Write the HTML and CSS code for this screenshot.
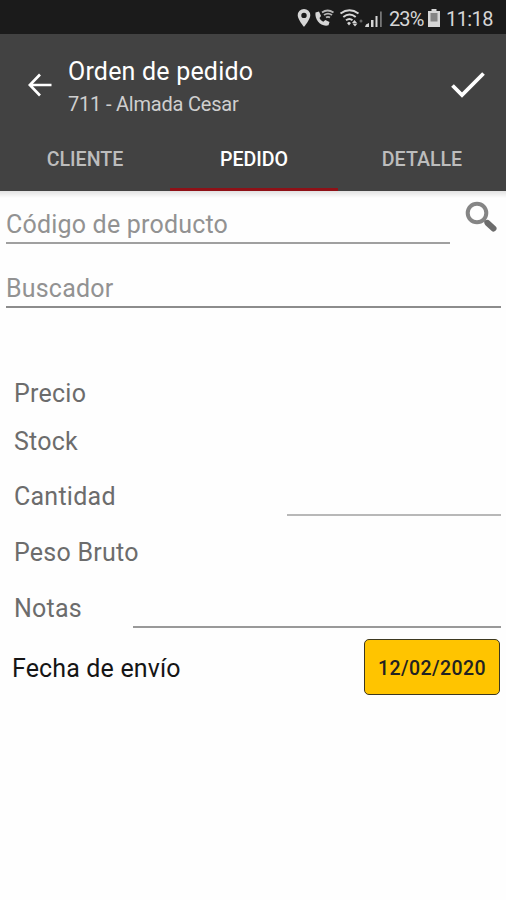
FILE: index.html
```html
<!DOCTYPE html>
<html lang="es">
<head>
<meta charset="utf-8">
<title>Orden de pedido</title>
<link rel="stylesheet" href="styles.css">
</head>
<body>
<div class="status">
  <svg class="status-icons" width="88" height="24" viewBox="0 0 88 24">
    <path fill="#d6d6d6" fill-rule="evenodd" d="M8 3a6.3 6.3 0 0 0-6.3 6.3C1.700 13.500 8 21 8 21s6.300-7.500 6.300-11.700A6.300 6.300 0 0 0 8 3zm0 3.700a2.700 2.700 0 1 1 0 5.400 2.700 2.700 0 0 1 0-5.400z"/>
    <path fill="#d6d6d6" d="M19.500 6.500l3.500-1 2 4.500-1.500 2c.8 1.800 2 3 3.800 3.700l2-1.700 4.200 2-1 3.300c-7.500 2-14-5.500-13-12.800z"/>
    <g fill="none" stroke="#b5b5b5" stroke-width="1.800"><path d="M26 6.500q5.500-4 11.500 0M28 9q4-2.800 8 0M30 11.500q2-1.300 4 0"/></g>
    <g fill="none" stroke="#d6d6d6" stroke-width="2"><path d="M44.500 7.500q9-6.500 18 0M47.300 11q6.200-5 12.400 0M50 14.300q3.500-2.600 6.500 0"/></g>
    <path fill="#d6d6d6" d="M51 17l2-1.300 2 1.300-2 2.500zM56 17l2.500-3 2.500 3zM56.500 17.500h5l-2.500 3z"/>
    <circle cx="65" cy="15" r="1.500" fill="#666"/>
    <path fill="#d6d6d6" d="M70 18.500l3-1.500v4h-4zM75 14h2.500v7H75zM79.500 10h2v11h-2z"/>
    <path fill="#777" d="M84 5.500h1.800V21H84z"/>
  </svg>
  <span class="battery-text">23%</span>
  <svg class="battery" width="12" height="18" viewBox="0 0 12 18"><path fill="#d6d6d6" d="M3.500 0h5v2H12v16H0V2h3.500z"/><path fill="#858585" d="M2.500 4h7v8.500h-7z"/></svg>
  <span class="clock">11:18</span>
</div>
<header class="header">
  <div class="toolbar">
    <svg class="back" width="24" height="24" viewBox="0 0 24 24"><path fill="none" stroke="#fff" stroke-width="2.700" d="M23.500 12H2M12 1.500L1.800 12 12 22.500"/></svg>
    <div class="titles">
      <h1 class="title">Orden de pedido</h1>
      <p class="subtitle">711 - Almada Cesar</p>
    </div>
    <svg class="check" width="34" height="28" viewBox="0 0 34 28"><path fill="none" stroke="#fff" stroke-width="3.800" d="M1.500 14.500l9.500 9.500L32.500 2.500"/></svg>
  </div>
  <nav class="tabs">
    <span class="tab">CLIENTE</span>
    <span class="tab active">PEDIDO</span>
    <span class="tab">DETALLE</span>
  </nav>
</header>
<main class="form">
  <div class="search-row">
    <div class="field code"><span>Código de producto</span></div>
    <svg class="search" width="32" height="32" viewBox="0 0 32 32"><circle cx="12" cy="12" r="9.300" fill="none" stroke="#858585" stroke-width="4"/><path d="M19.500 19.500l3 3" stroke="#858585" stroke-width="3"/><path d="M22.500 22l6 5.500" stroke="#6c6c6c" stroke-width="6" stroke-linecap="round"/></svg>
  </div>
  <div class="field finder"><span>Buscador</span></div>
  <div class="row precio"><span>Precio</span></div>
  <div class="row stock"><span>Stock</span></div>
  <div class="row cantidad"><span>Cantidad</span><span class="input quantity"></span></div>
  <div class="row peso"><span>Peso Bruto</span></div>
  <div class="row notas"><span>Notas</span><span class="input notes"></span></div>
  <div class="date-row"><span class="date-label">Fecha de envío</span><button class="date">12/02/2020</button></div>
</main>
</body>
</html>
```
FILE: styles.css
```css
* { box-sizing: border-box; }
body { margin: 0; width: 506px; height: 900px; overflow: hidden; background: #fefefe; font-family: Roboto, sans-serif; }
h1, p { margin: 0; font-weight: 400; }
svg { display: block; flex: none; }
.status { display: flex; height: 34px; padding: 6px 0 0 296px; background: #1b1b1b; color: #d6d6d6; font-size: 20px; line-height: 26px; white-space: nowrap; }
.battery-text { width: 37px; margin-left: 5px; letter-spacing: -0.9px; }
.battery { margin: 3px 6px 0 2px; }
.clock { letter-spacing: -0.6px; }
.header { height: 157px; background: #424242; }
.toolbar { display: flex; height: 92px; padding-left: 28px; }
.back { margin-top: 39px; }
.titles { width: 398px; padding: 23px 0 0 16px; }
.title { color: #fff; font-size: 25px; line-height: 30px; letter-spacing: 0.2px; }
.subtitle { margin-top: 5px; color: #cfcfcf; font-size: 20px; line-height: 24px; letter-spacing: -0.2px; }
.check { margin-top: 37px; margin-left: 1px; }
.tabs { display: grid; grid-template-columns: 170px 168px 168px; height: 65px; }
.tab { padding-top: 22px; text-align: center; color: #bdbdbd; font-size: 19.6px; font-weight: 500; line-height: 24px; }
.active { color: #fff; border-bottom: 3px solid #8f1117; }
.form { padding: 0 5px 0 6px; background: linear-gradient(#e2e2e2, #fefefe 7px); }
.search-row { display: flex; justify-content: space-between; height: 53px; }
.field { border-bottom: 2px solid #a0a0a0; color: #929292; font-size: 25px; line-height: 30px; letter-spacing: 0.2px; }
.code { width: 444px; padding-top: 19px; }
.search { margin: 10px 4px 0 0; }
.finder { height: 64px; padding-top: 30px; border-color: #8c8c8c; }
.row { display: flex; align-items: flex-start; padding-left: 8px; color: #6c6c6c; font-size: 25px; line-height: 30px; letter-spacing: 0.25px; }
.precio { height: 118px; padding-top: 71px; }
.stock { height: 47px; padding-top: 1px; }
.cantidad { height: 43px; padding-top: 9px; justify-content: space-between; }
.input { align-self: flex-end; border-bottom: 2px solid #999; }
.quantity { width: 214px; border-color: #b8b8b8; }
.peso { height: 56px; padding-top: 22px; }
.notas { height: 56px; padding-top: 22px; justify-content: space-between; }
.notes { width: 368px; }
.date-row { display: flex; justify-content: space-between; margin-top: 11px; padding: 0 1px 0 6px; }
.date-label { padding-top: 15px; color: #151515; font-size: 25px; line-height: 30px; letter-spacing: 0.15px; }
.date { width: 136px; height: 56px; padding: 3px 0 0; border: 1px solid #3d3820; border-radius: 5px; background: #ffc400; color: #222; font: 500 19.5px/24px Roboto, sans-serif; letter-spacing: 0.4px; }
```
